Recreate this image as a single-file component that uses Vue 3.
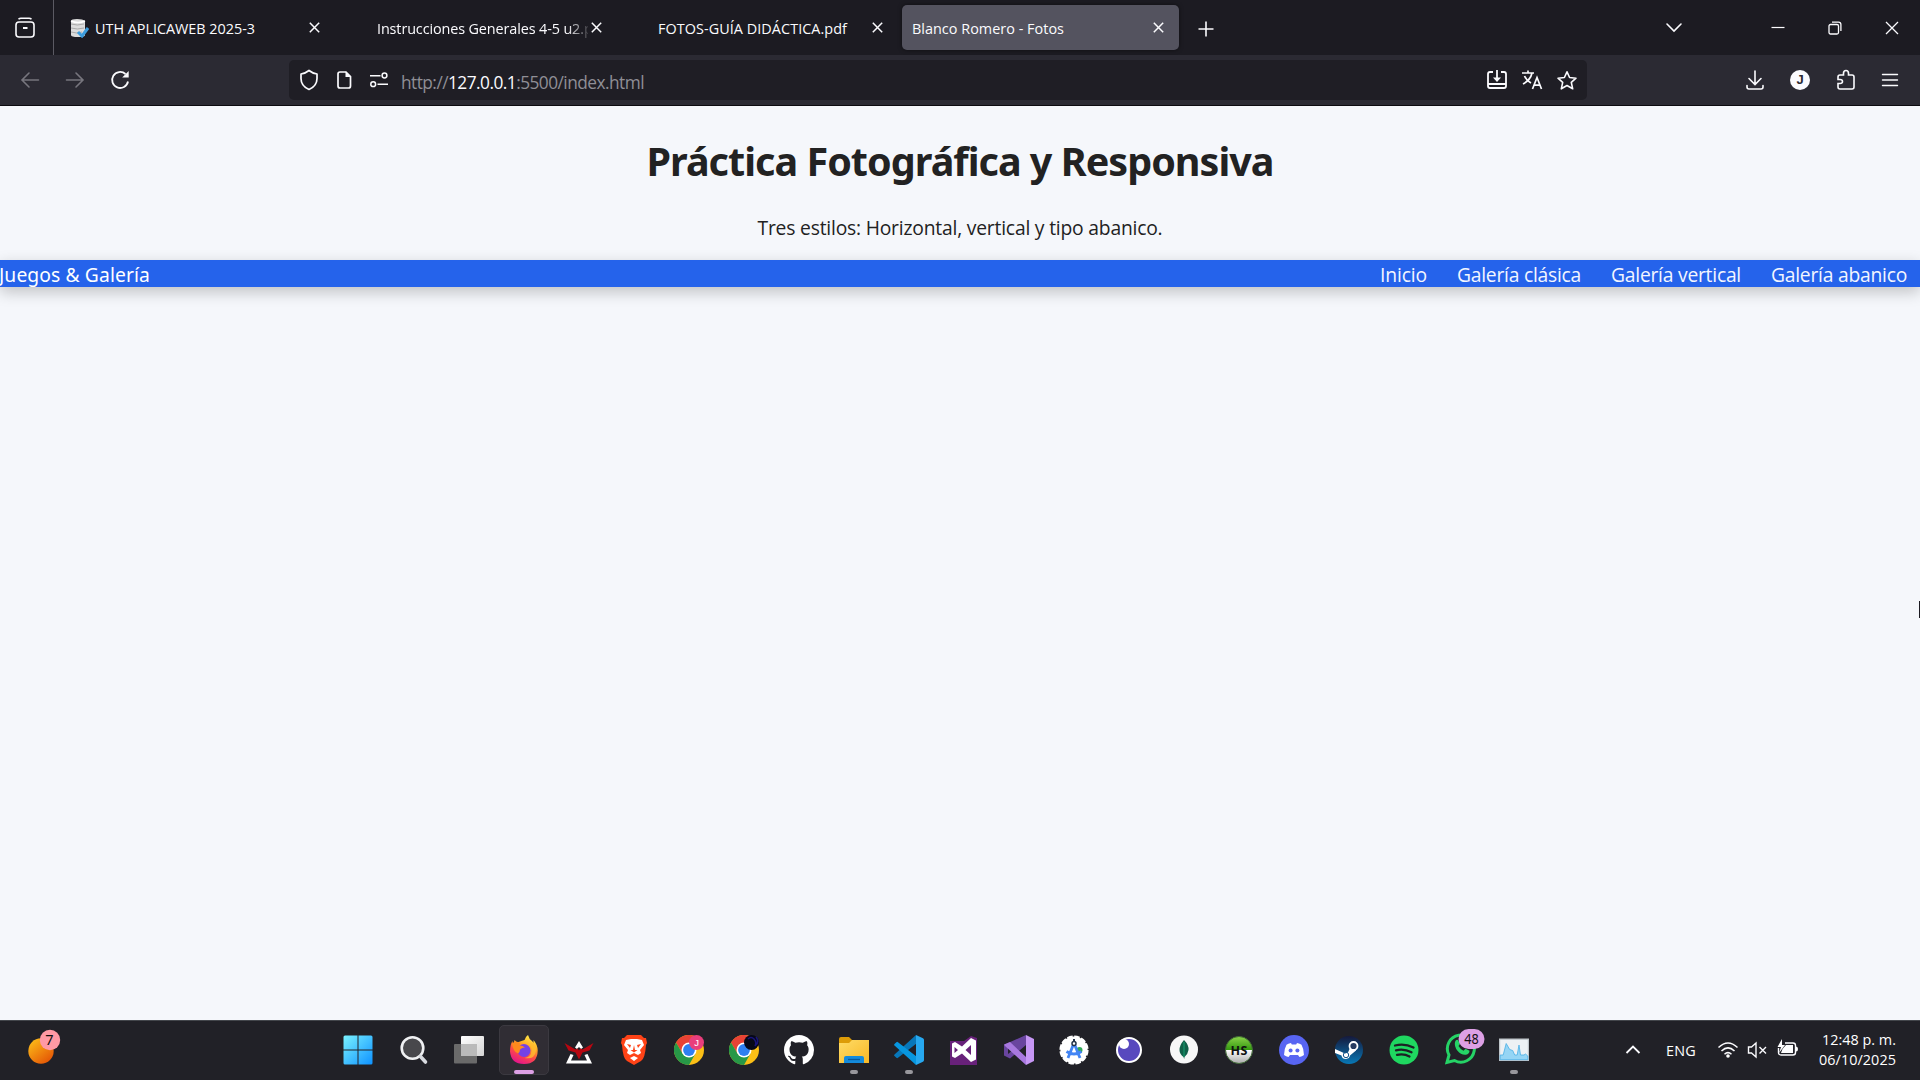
<script setup>
const links = [
  { label: 'Inicio', width: 47 },
  { label: 'Galería clásica', width: 124 },
  { label: 'Galería vertical', width: 130 },
  { label: 'Galería abanico', width: 136 },
]

// Spreads a label's letters so that it occupies the given width in pixels.
const vFit = {
  mounted(el, { value }) {
    const natural = el.getBoundingClientRect().width
    const count = el.textContent.length
    el.style.letterSpacing = `${(value - natural) / count}px`
  },
}
</script>

<template>
  <div class="screen">
    <header class="tabs">
      <div class="recent">
        <svg width="22" height="22" viewBox="0 0 22 22" class="line">
          <path d="M4.500 2.200Q5.500 1.200 7 1.200h8q1.500 0 2.500 1" />
          <rect x="2" y="5" width="18" height="15" rx="3" />
          <path d="M9 11h4.500" stroke-width="2" />
        </svg>
      </div>
      <div class="tab first">
        <svg class="favicon" width="20" height="20" viewBox="0 0 20 20">
          <path d="M2 3Q2 1 8 1t8 2v14q0 2-7 2t-7-2z" fill="#dcdcdc" />
          <path d="M2 6q6 2 13 0M2 10q6 2 13 0M2 14q6 2 11 0" stroke="#aaa" fill="none" />
          <path d="M2 3q7 3 14 0" stroke="#fff" stroke-width="1.500" fill="none" />
          <path d="M9 14l4 4 6-8" stroke="#3d9ddd" stroke-width="3" fill="none" />
        </svg>
        <span v-fit="160">UTH APLICAWEB 2025-3</span>
        <svg class="close" width="11" height="11" viewBox="0 0 11 11"><path d="M.8.8l9.400 9.400M10.200.8L.8 10.200" /></svg>
      </div>
      <div class="tab second">
        <div class="clip"><span v-fit="229">Instrucciones Generales 4-5 u2.pdf</span></div>
        <svg class="close" width="11" height="11" viewBox="0 0 11 11"><path d="M.8.8l9.400 9.400M10.200.8L.8 10.200" /></svg>
      </div>
      <div class="tab third">
        <span v-fit="189">FOTOS-GUÍA DIDÁCTICA.pdf</span>
        <svg class="close" width="11" height="11" viewBox="0 0 11 11"><path d="M.8.8l9.400 9.400M10.200.8L.8 10.200" /></svg>
      </div>
      <div class="tab active">
        <span v-fit="152">Blanco Romero - Fotos</span>
        <svg class="close" width="11" height="11" viewBox="0 0 11 11"><path d="M.8.8l9.400 9.400M10.200.8L.8 10.200" /></svg>
      </div>
      <svg class="plus line" width="16" height="16" viewBox="0 0 16 16"><path d="M8 .5v15M.5 8h15" /></svg>
      <div class="window">
        <svg class="line" width="18" height="12" viewBox="0 0 18 12"><path d="M2 2l7 7 7-7" stroke-linecap="round" /></svg>
        <svg class="line" width="14" height="14" viewBox="0 0 14 14"><path d="M.5 6.500h13" stroke-width="1.200" /></svg>
        <svg class="line" width="14" height="14" viewBox="0 0 14 14">
          <rect x="1" y="3.500" width="9.500" height="9.500" rx="1.500" stroke-width="1.300" />
          <path d="M4 1.200h6.500q2.400 0 2.400 2.400v6.400" stroke-width="1.300" />
        </svg>
        <svg class="line" width="14" height="14" viewBox="0 0 14 14"><path d="M1 1l12 12M13 1L1 13" stroke-width="1.300" /></svg>
      </div>
    </header>

    <div class="toolbar">
      <div class="history">
        <svg class="line dim" width="20" height="18" viewBox="0 0 20 18"><path d="M18.500 9H2M9 2L2 9l7 7" stroke-linecap="round" /></svg>
        <svg class="line dim" width="20" height="18" viewBox="0 0 20 18"><path d="M1.500 9H18M11 2l7 7-7 7" stroke-linecap="round" /></svg>
        <svg class="line" width="20" height="20" viewBox="0 0 20 20">
          <path d="M18 11.500A8 8 0 1 1 15.500 4" stroke-width="1.800" />
          <path d="M18.700 1v6.500h-6.500z" fill="#fbfbfe" stroke="none" />
        </svg>
      </div>
      <div class="address">
        <svg class="line shield" width="20" height="22" viewBox="0 0 20 22">
          <path d="M10 1.500q3.500 2.800 8 3.500v4.500q0 7.500-8 11-8-3.500-8-11V5q4.500-.7 8-3.500z" stroke-width="1.700" stroke-linejoin="round" />
        </svg>
        <svg class="line page-icon" width="16" height="20" viewBox="0 0 16 20">
          <path d="M4 2h6l4.500 4.500V16q0 2-2 2H4q-2 0-2-2V4q0-2 2-2z" stroke-width="1.700" />
          <path d="M9.500 1.500v5.500h5.500z" fill="#fbfbfe" stroke="none" />
        </svg>
        <svg class="line perms" width="20" height="18" viewBox="0 0 20 18">
          <path d="M1 4.800h10.500M8.500 13.200h10.500" stroke-width="1.600" />
          <circle cx="15.500" cy="4.500" r="2.400" stroke-width="1.500" />
          <circle cx="4.200" cy="13.200" r="2.400" stroke-width="1.500" />
        </svg>
        <span v-fit="243" class="url">http://<b>127.0.0.1</b>:5500/index.html</span>
        <div class="actions">
          <svg class="line" width="22" height="20" viewBox="0 0 22 20">
            <path d="M7 2H4Q2 2 2 4v12q0 2 2 2h14q2 0 2-2V4q0-2-2-2h-3M2 14h18" stroke-width="1.800" />
            <path d="M11 0v9" stroke-width="1.800" />
            <path d="M7 7.500h8L11 12z" fill="#fbfbfe" stroke="none" />
          </svg>
          <svg class="line" width="22" height="20" viewBox="0 0 22 20">
            <path d="M1 3h12M7 .5V3M11 3q-1.500 7-9 11M3.500 6q2 4.500 6.500 7M11.500 19l4.500-11.500L20.500 19M13 15.200h6" stroke-width="1.700" />
          </svg>
          <svg class="line" width="22" height="21" viewBox="0 0 22 21">
            <path d="M11 1.800l2.600 5.700 6.400.7-4.700 4.200 1.400 6.400-5.700-3.300-5.700 3.300 1.400-6.400L2 8.200l6.400-.7z" stroke-linejoin="round" stroke-width="1.600" />
          </svg>
        </div>
      </div>
      <div class="tools">
        <svg class="line" width="20" height="22" viewBox="0 0 20 22">
          <path d="M10 2v13M4 9.500l6 6 6-6M2 16.500v1.500q0 2 2 2h12q2 0 2-2v-1.500" stroke-linecap="round" />
        </svg>
        <div class="avatar">J</div>
        <svg class="line" width="20" height="22" viewBox="0 0 20 22">
          <path d="M4 6h3.500V4.200q0-2.700 2.500-2.700t2.500 2.700V6H16q2 0 2 2v10q0 2-2 2H4q-2 0-2-2v-3.500h2q2.500 0 2.500-2t-2.500-2H2V8q0-2 2-2z" stroke-width="1.600" />
        </svg>
        <svg class="line" width="18" height="16" viewBox="0 0 18 16"><path d="M1.500 2.500h15M1.500 8h15M1.500 13.500h15" stroke-linecap="round" stroke-width="1.400" /></svg>
      </div>
    </div>

    <main class="page">
      <h1><span v-fit="627">Práctica Fotográfica y Responsiva</span></h1>
      <p><span v-fit="405">Tres estilos: Horizontal, vertical y tipo abanico.</span></p>
      <nav>
        <span v-fit="151" class="brand">Juegos &amp; Galería</span>
        <div class="links">
          <a v-for="link in links" :key="link.label" v-fit="link.width">{{ link.label }}</a>
        </div>
      </nav>
      <i class="cursor"></i>
    </main>

    <footer class="taskbar">
      <div class="weather">
        <svg width="36" height="40" viewBox="0 0 36 40">
          <defs>
            <linearGradient id="sun" x1="0" y1="0" x2=".8" y2="1"><stop stop-color="#ffc61a" /><stop offset="1" stop-color="#e35205" /></linearGradient>
          </defs>
          <circle cx="14" cy="24" r="12.700" fill="url(#sun)" />
          <circle cx="23" cy="13" r="10.200" fill="#ff99a4" />
          <text x="22.500" y="18" text-anchor="middle" class="count">7</text>
        </svg>
      </div>

      <div class="apps">
        <div class="app start">
          <svg width="30" height="30" viewBox="0 0 30 30">
            <defs><linearGradient id="win" gradientUnits="userSpaceOnUse" x1="0" y1="0" x2="30" y2="30"><stop stop-color="#7cf4ff" /><stop offset="1" stop-color="#0c90ff" /></linearGradient></defs>
            <path d="M2 .5h12.500V14.500H.5V2Q.5.5 2 .5zM15.500.5H28q1.500 0 1.500 1.500v12.500h-14zM.5 15.500h14v14H2Q.5 29.500.5 28zM15.500 15.500h14V28q0 1.500-1.500 1.500H15.500z" fill="url(#win)" />
          </svg>
        </div>
        <div class="app">
          <svg width="30" height="30" viewBox="0 0 30 30">
            <circle cx="13.500" cy="13" r="10.800" fill="#48484c" stroke="#f0f1f3" stroke-width="2.600" />
            <path d="M21.500 21.500l5 5.500" stroke="#d8dbe0" stroke-width="3.600" stroke-linecap="round" />
          </svg>
        </div>
        <div class="app">
          <svg width="30" height="30" viewBox="0 0 30 30">
            <defs><linearGradient id="view" x2="1" y2="1"><stop stop-color="#fff" /><stop offset="1" stop-color="#d4d4d4" /></linearGradient></defs>
            <rect x="7" y="1" width="23" height="20" rx="1" fill="url(#view)" />
            <rect y="9" width="23" height="19.500" rx="1" fill="#777" opacity=".85" />
            <path d="M7 9h16v12H7z" fill="#bababa" />
          </svg>
        </div>
        <div class="app focused">
          <svg width="30" height="30" viewBox="0 0 30 30">
            <defs><linearGradient id="fox" x1=".8" y1="0" x2=".35" y2="1"><stop stop-color="#fff44f" /><stop offset=".35" stop-color="#ffae24" /><stop offset=".65" stop-color="#ff4c44" /><stop offset="1" stop-color="#e3158b" /></linearGradient></defs>
            <path d="M15.500 5Q17 1 19 0q1 4 4 6 1 1 1.500 2V5q4 4.500 4.200 10.500Q28.500 29 15 29 2 29 1 16.500 1 9.500 3.500 6q0 2 1 3l1-4q2 2.500 4 2z" fill="url(#fox)" />
            <circle cx="15" cy="15.500" r="6.500" fill="#7542e5" />
            <path d="M3 8q5-2 8 0 0 1-1 2.500 3-.5 6 2-3 0-5 2 0 3-2 4Q4 17 3 8z" fill="#ff8a1d" />
            <path d="M15 9q8-1 7.500 7-.5 6-7 7 10 2 11.500-7 .5-5-3-8z" fill="#ffbd2e" opacity=".8" />
          </svg>
          <i class="pip"></i>
        </div>
        <div class="app">
          <svg width="30" height="30" viewBox="0 0 30 30">
            <path d="M15 6l4 6.500-2 1.500-2-2-2 2-2-1.500zM6.500 19l3 1-2.500 5.500h16L20.500 20l3-1 4.500 9.500H2z" fill="#fff" />
            <path d="M.5 8l11 6.500 2-1 1.500 2 1.500-2 2 1 11-6.500-4 7.500-7 2-3.500 7-3.500-7-7-2z" fill="#b80711" />
          </svg>
        </div>
        <div class="app">
          <svg width="30" height="30" viewBox="0 0 30 30">
            <path d="M8 0h14l3 3h2l1 5-1 2q-1 14-5 16l-7 4-7-4Q4 24 3 10L2 8l1-5h2z" fill="#ff4317" />
            <path d="M7 5l5-1h6l5 1 2 5-4 5 1 3-3 2-4-2-4 2-3-2 1-3-4-5zM15 21l4 2-4 3-4-3z" fill="#fff" />
            <path d="M8 9l4 1-1 3zM22 9l-4 1 1 3zM15 10l1 5h2.500L15 17.500 11.500 15H14z" fill="#ff4317" />
          </svg>
        </div>
        <div v-for="profile in ['pink', 'dark']" :key="profile" class="app">
          <svg width="30" height="30" viewBox="0 0 30 30">
            <circle cx="15" cy="15" r="15" fill="#fbbf16" />
            <path d="M15 8h13.300A15 15 0 0 0 2 7.500l6.500 11z" fill="#e94235" />
            <path d="M2 7.500A15 15 0 0 0 15 30l6.500-11.500H8.500z" fill="#279847" />
            <circle cx="15" cy="15" r="7.500" fill="#fff" /><circle cx="15" cy="15" r="5.900" fill="#2f7ff0" />
            <g v-if="profile === 'pink'">
              <circle cx="22.500" cy="7.500" r="7.500" fill="#e93e7c" />
              <text x="22.500" y="11" text-anchor="middle" class="profile">J</text>
            </g>
            <g v-else>
              <circle cx="22.500" cy="7.500" r="7.500" fill="#060817" />
              <path d="M19 4q3-3 6 0t1 7q5-4 1-9" stroke="#18147a" stroke-width="1.500" fill="none" />
            </g>
          </svg>
        </div>
        <div class="app">
          <svg width="30" height="30" viewBox="0 0 16 16">
            <path d="M8 0C3.580 0 0 3.580 0 8c0 3.540 2.290 6.530 5.470 7.590.4.070.55-.17.550-.38v-1.490c-2.010.37-2.530-.49-2.690-.94-.09-.23-.48-.94-.82-1.130-.28-.15-.68-.52-.01-.53.63-.01 1.080.58 1.230.82.720 1.210 1.870.87 2.330.66.070-.52.280-.87.510-1.070-1.780-.2-3.640-.89-3.640-3.950 0-.87.310-1.590.82-2.150-.08-.2-.36-1.020.08-2.120 0 0 .67-.21 2.200.82.640-.18 1.320-.27 2-.27s1.360.09 2 .27c1.530-1.040 2.200-.82 2.200-.82.440 1.100.16 1.920.08 2.120.51.560.82 1.270.82 2.150 0 3.070-1.870 3.750-3.650 3.950.29.250.54.730.54 1.480v2.200c0 .21.150.46.550.38A8.010 8.010 0 0 0 16 8c0-4.420-3.580-8-8-8z" fill="#fff" />
          </svg>
        </div>
        <div class="app">
          <svg width="30" height="30" viewBox="0 0 30 30">
            <defs><linearGradient id="dir" x2="1" y2="1"><stop stop-color="#ffdc67" /><stop offset="1" stop-color="#f8b826" /></linearGradient></defs>
            <path d="M0 4q0-2 2-2h8l3 3v5H0z" fill="#dd9c08" />
            <path d="M0 8h10l3-3h17v23H0z" fill="url(#dir)" />
            <path d="M5 28v-5q0-2 2-2h16q2 0 2 2v5z" fill="#148bdc" />
            <path d="M9 24.500h12" stroke="#095a9c" stroke-width="1.300" />
          </svg>
          <i class="pip small"></i>
        </div>
        <div class="app">
          <svg width="30" height="30" viewBox="0 0 30 30">
            <path d="M22 0l.5 8.500L4 22.800q-.8.700-1.600 0L.5 21q-.8-.8 0-1.600z" fill="#0877b9" />
            <path d="M22 30l.5-8.500L4 7.200q-.8-.7-1.600 0L.5 9q-.8.800 0 1.600z" fill="#0796df" />
            <path d="M22 0l7 3.300q1 .6 1 1.700v20q0 1.100-1 1.700L22 30z" fill="#27a8ef" />
          </svg>
          <i class="pip small"></i>
        </div>
        <div class="app">
          <svg width="30" height="30" viewBox="0 0 30 30">
            <path d="M1 6h14l7-5 6 2v27H1z" fill="#68217a" />
            <path fill-rule="evenodd" d="M22 3l5 2.500v19L22 27l-9-8.500L6 23l-3-1.500v-13L6 7l7 4.500zM22 10l-5.500 5 5.500 5zM5.500 12v6l3.500-3z" fill="#fff" />
          </svg>
        </div>
        <div class="app">
          <svg width="30" height="30" viewBox="0 0 30 30">
            <path fill-rule="evenodd" d="M0 10l4-2 18-8v10L6 23.500 0 20.500zM4 11v8l5-4z" fill="#69459f" />
            <path d="M0 9.500L6 7l16 15v8L1 11z" fill="#a878df" />
            <path d="M22 0l8 4v22l-8 4z" fill="#c697f5" />
          </svg>
        </div>
        <div class="app">
          <svg width="30" height="30" viewBox="0 0 30 30">
            <circle cx="15" cy="15" r="13.600" fill="#fff" stroke="#fff" stroke-width="2" stroke-dasharray="5.500 1.600" />
            <circle cx="20.500" cy="15" r="3" fill="#31a857" />
            <path d="M15 8L9 23M15 8l6 15M7.500 16.500q7.500 5 15 0" stroke="#4285f4" stroke-width="2.800" fill="none" />
            <circle cx="15" cy="8.500" r="2" fill="#fff" stroke="#25344a" stroke-width="1.500" /><path d="M15 4v3" stroke="#25344a" stroke-width="2" />
          </svg>
        </div>
        <div class="app">
          <svg width="30" height="30" viewBox="0 0 30 30">
            <circle cx="15" cy="15" r="12" fill="#5849be" stroke="#fff" stroke-width="2" />
            <circle cx="10" cy="9" r="5" fill="#fff" />
          </svg>
        </div>
        <div class="app">
          <svg width="30" height="30" viewBox="0 0 30 30">
            <circle cx="15" cy="14.500" r="14" fill="#f7f7f7" />
            <path d="M15 5q5 5 4.500 10-.5 4-4 7l-.3 2-.7-2q-4-3-4-7Q10.500 10 15 5z" fill="#116149" />
            <path d="M15 7v15" stroke="#16a071" />
          </svg>
        </div>
        <div class="app">
          <svg width="30" height="30" viewBox="0 0 30 30">
            <defs><linearGradient id="hs" x2="0" y2="1"><stop stop-color="#8bd34a" /><stop offset=".5" stop-color="#32980e" /><stop offset=".5" stop-color="#fff" /><stop offset="1" stop-color="#aaa" /></linearGradient></defs>
            <circle cx="15" cy="15" r="13.500" fill="url(#hs)" stroke="#3f6a35" />
            <text x="15" y="19.500" text-anchor="middle" class="hs" textLength="17">HS</text>
          </svg>
        </div>
        <div class="app">
          <svg width="30" height="30" viewBox="0 0 30 30">
            <circle cx="15" cy="15" r="15" fill="#5865f2" />
            <path d="M12 8l.8 1.500h4.400L18 8q3 .5 4.500 1.700Q25 14 25 20q-2 1.700-4.500 2l-1.500-2h-8l-1.500 2Q7 21.700 5 20q0-6 2.500-10.300Q9 8.500 12 8z" fill="#fff" />
            <circle cx="11.600" cy="15.500" r="2" fill="#5865f2" /><circle cx="18.400" cy="15.500" r="2" fill="#5865f2" />
          </svg>
        </div>
        <div class="app">
          <svg width="30" height="30" viewBox="0 0 30 30">
            <defs><linearGradient id="steam" x2="0" y2="1"><stop stop-color="#15193c" /><stop offset="1" stop-color="#0878b6" /></linearGradient></defs>
            <circle cx="15" cy="15" r="14" fill="url(#steam)" />
            <path d="M1 14l10 4.500 3-1 3-7h5v5l-6 5q-.5 3-4 3.500-4 0-4.500-3.500L1 18z" fill="#fff" />
            <circle cx="19.500" cy="11" r="4" fill="#273b60" stroke="#fff" stroke-width="1.800" />
            <circle cx="12" cy="20" r="2.700" fill="none" stroke="#14558a" stroke-width="1" />
          </svg>
        </div>
        <div class="app">
          <svg width="30" height="30" viewBox="0 0 30 30">
            <circle cx="15" cy="15" r="14.500" fill="#1fd760" />
            <path d="M6 10.500q9.500-2.500 18.500 2M7 15.300q8-2 15.500 2M8 19.800q7-1.600 12.500 1.700" stroke="#1c2124" stroke-width="2.300" stroke-linecap="round" fill="none" />
          </svg>
        </div>
        <div class="app">
          <svg width="44" height="36" viewBox="0 0 44 36" class="chat">
            <path d="M3 33.500l2-7.500A13.500 13.500 0 1 1 10.500 31.500z" fill="none" stroke="#25d366" stroke-width="3" />
            <path d="M11 13q1-3 3-2l2 4-1.500 2q2 3.500 5 4.800l2-2 4 2q0 3-3.500 4-5 .5-8.500-4T11 13z" fill="#25d366" />
            <rect x="14.500" y="0" width="26" height="20" rx="10" fill="#dda0e5" />
            <text x="27.500" y="15" text-anchor="middle" class="count" textLength="14.500" lengthAdjust="spacingAndGlyphs">48</text>
          </svg>
        </div>
        <div class="app">
          <svg width="30" height="30" viewBox="0 0 30 30">
            <rect x=".6" y="4.100" width="28.800" height="21.300" fill="#edf1f4" stroke="#bfc5ca" stroke-width="1.200" />
            <path d="M1.200 20h3l3-11.500 3.500 6 3 1 2 4.500h2.500L20 10l1.500 10h3.500l1.500-1 2.300 2v3.700H1.200z" fill="#95d5f5" stroke="#48aee6" stroke-width=".8" />
          </svg>
          <i class="pip small"></i>
        </div>
      </div>

      <div class="tray">
        <svg class="line caret" width="16" height="10" viewBox="0 0 16 10"><path d="M1.500 8L8 1.500 14.500 8" stroke-width="1.800" /></svg>
        <span v-fit="30" class="lang">ENG</span>
        <svg class="line wifi" width="22" height="18" viewBox="0 0 22 18">
          <path d="M1.500 6.500q9.500-9 19 0M4.500 10q6.500-6.200 13 0M7.500 13.200q3.500-3.200 7 0" stroke-width="1.500" />
          <circle cx="11" cy="15" r="1.800" fill="#fff" stroke="none" />
        </svg>
        <svg class="line volume" width="21" height="18" viewBox="0 0 21 18">
          <path d="M1.500 6h3L9 2v14l-4.500-4h-3zM12.500 6l6.500 6.500M19 6l-6.500 6.500" stroke-width="1.400" />
        </svg>
        <svg class="line battery" width="22" height="18" viewBox="0 0 22 18">
          <path d="M8 4h8q2.500 0 2.500 2.500v7Q18.500 16 16 16H4q-2.500 0-2.500-2.500V9" stroke-width="1.400" />
          <path d="M4 14l1.500-4L9 6h7v8zM19 7.500q2 0 2 2.500t-2 2.500zM5 0L.5 8H4l-2 6 6-8H5z" fill="#fff" stroke="none" />
        </svg>
        <div class="clock">
          <span v-fit="74">12:48 p. m.</span>
          <span v-fit="77">06/10/2025</span>
        </div>
      </div>
    </footer>
  </div>
</template>

<style>
html,
body {
  margin: 0;
  overflow: hidden;
}
</style>

<style scoped>
.screen {
  width: 1920px;
  height: 1080px;
  overflow: hidden;
  display: flex;
  flex-direction: column;
  font-family: 'Open Sans', 'Noto Sans', sans-serif;
  background: #f5f7fb;
}
svg {
  display: block;
  flex: none;
}
.line {
  fill: none;
  stroke: #fbfbfe;
  stroke-width: 1.6;
}
.dim {
  stroke: #77767e;
}
.tabs {
  height: 55px;
  flex: none;
  display: flex;
  align-items: center;
  background: #1c1b22;
  color: #fbfbfe;
  font-size: 14.4px;
  white-space: nowrap;
}
.recent {
  width: 54px;
  height: 55px;
  flex: none;
  display: flex;
  align-items: center;
  padding-left: 14px;
  box-sizing: border-box;
  border-right: 1px solid #5b5a63;
}
.tab {
  height: 45px;
  flex: none;
  box-sizing: border-box;
  display: flex;
  align-items: center;
  border-radius: 5px;
}
.tab span {
  padding-top: 1px;
}
.first {
  width: 285px;
  padding-left: 15px;
}
.favicon {
  margin-right: 6px;
}
.second {
  width: 282px;
  padding-left: 38px;
}
.clip {
  width: 211px;
  padding-top: 2px;
  overflow: hidden;
  mask-image: linear-gradient(to right, #000 190px, transparent 215px);
}
.third {
  width: 281px;
  padding-left: 37px;
}
.active {
  width: 277px;
  padding-left: 10px;
  background: #54535f;
  box-shadow: 0 0 4px rgba(0, 0, 0, 0.5);
}
.close {
  margin-left: auto;
  margin-right: 15px;
  stroke: #fbfbfe;
  stroke-width: 1.5;
  fill: none;
}
.first .close,
.second .close,
.third .close {
  margin-right: 19px;
}
.plus {
  margin-left: 19px;
  margin-top: 2px;
}
.window {
  display: flex;
  align-items: center;
  gap: 43px;
  margin-left: auto;
  padding-right: 21px;
}
.window svg:first-child {
  margin-right: 45px;
}
.toolbar {
  height: 51px;
  flex: none;
  box-sizing: border-box;
  border-bottom: 1px solid #0c0b10;
  background: #2b2a33;
  display: flex;
  align-items: center;
}
.history {
  width: 289px;
  box-sizing: border-box;
  padding-left: 20px;
  display: flex;
  align-items: center;
  gap: 25px;
}
.address {
  width: 1298px;
  height: 40px;
  box-sizing: border-box;
  border-radius: 5px;
  background: #1f1e25;
  display: flex;
  align-items: center;
  padding: 0 9px 0 10px;
}
.page-icon {
  margin-left: 17px;
}
.perms {
  margin-left: 17px;
}
.url {
  margin: 4px 0 0 12px;
  font-size: 17.3px;
  color: #8f8e96;
}
.url b {
  font-weight: 400;
  color: #fbfbfe;
}
.actions {
  margin-left: auto;
  display: flex;
  align-items: center;
  gap: 13px;
}
.tools {
  display: flex;
  align-items: center;
  margin-left: auto;
  padding-right: 21px;
}
.tools svg:last-child {
  margin-left: 25px;
}
.avatar {
  width: 20px;
  height: 20px;
  border-radius: 50%;
  background: #fbfbfe;
  color: #2b2a33;
  font-family: 'Liberation Sans', sans-serif;
  font-size: 13px;
  font-weight: 700;
  line-height: 20px;
  text-align: center;
  margin: 0 26px 0 25px;
}
.page {
  flex: 1;
  position: relative;
  color: #222;
}
h1 {
  margin: 0;
  padding-top: 28px;
  font-family: 'Noto Sans', 'Open Sans', sans-serif;
  font-size: 39.5px;
  line-height: 55px;
  text-align: center;
}
p {
  margin: 25px 0 19px;
  font-size: 19.3px;
  line-height: 27px;
  text-align: center;
}
nav {
  height: 27px;
  display: flex;
  justify-content: space-between;
  background: #2563eb;
  box-shadow: 0 5px 15px rgba(0, 0, 0, 0.22);
  color: #fff;
  font-size: 19.3px;
  line-height: 29px;
  white-space: nowrap;
}
.brand {
  margin-left: -1px;
  font-family: 'Noto Sans', 'Open Sans', sans-serif;
}
.links {
  display: flex;
  gap: 30px;
  padding-right: 13px;
}
.links a {
  color: #f3f6ff;
}
.cursor {
  position: absolute;
  right: 0;
  top: 495px;
  width: 1.5px;
  height: 17px;
  background: #1c1b22;
}
.taskbar {
  height: 60px;
  flex: none;
  box-sizing: border-box;
  border-top: 1px solid #43464b;
  background: #212127;
  display: flex;
  align-items: center;
  padding-bottom: 1px;
  color: #fff;
}
.weather {
  width: 331.5px;
  padding-left: 27px;
  box-sizing: border-box;
  margin-top: -7px;
}
.count {
  fill: #111;
  font-family: 'Noto Sans', sans-serif;
  font-size: 14.5px;
}
.profile {
  fill: #fff;
  font-family: 'Liberation Sans', sans-serif;
  font-size: 9.5px;
}
.hs {
  fill: #111;
  font-size: 12.5px;
  font-weight: 700;
}
.apps {
  display: flex;
}
.app {
  width: 55px;
  height: 50px;
  flex: none;
  display: flex;
  align-items: center;
  justify-content: center;
  position: relative;
}
.app.start svg {
  margin-right: 3px;
}
.focused {
  width: 50px;
  margin: 0 2.5px;
  box-sizing: border-box;
  border: 1px solid #3b3940;
  border-radius: 5px;
  background: #302d34;
}
.chat {
  margin: -7px -9px 0 0;
  transform: translateX(2px);
}
.pip {
  position: absolute;
  bottom: 1px;
  left: calc(50% - 10px);
  width: 20px;
  height: 4px;
  border-radius: 2px;
  background: #dda0e5;
}
.focused .pip {
  bottom: 0;
}
.pip.small {
  left: calc(50% - 4px);
  width: 8px;
  background: #98979c;
}
.tray {
  margin-left: auto;
  padding-right: 24px;
  display: flex;
  align-items: center;
  font-size: 14.4px;
}
.lang {
  margin-left: 25px;
}
.wifi {
  margin-left: 21px;
}
.volume {
  margin-left: 8px;
}
.battery {
  margin-left: 9px;
  margin-top: -4px;
}
.clock {
  display: flex;
  flex-direction: column;
  align-items: flex-end;
  width: 77px;
  margin-left: 20px;
  line-height: 20px;
  white-space: nowrap;
}
</style>
